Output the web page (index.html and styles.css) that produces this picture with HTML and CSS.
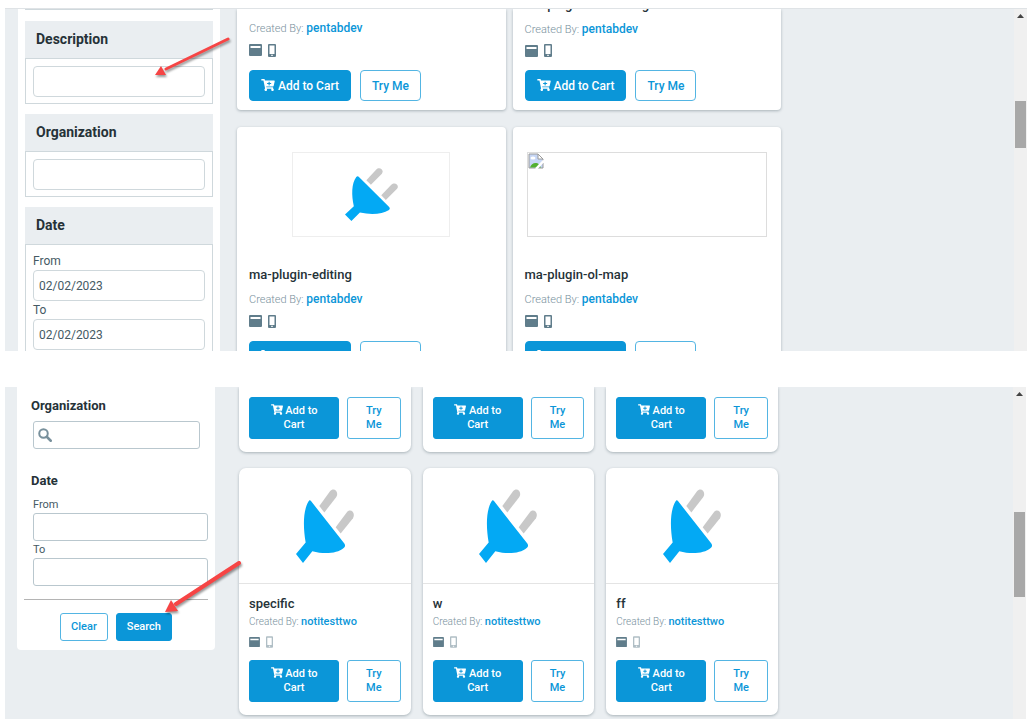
FILE: index.html
```html
<!DOCTYPE html>
<html lang="en">
<head>
    <meta charset="UTF-8">
    <meta name="viewport" content="width=device-width, initial-scale=1.0">
    <title>Plugin Store</title>
    <link rel="stylesheet" href="styles.css">
</head>
<body>
    <!-- Shared icons -->
    <svg class="sprite" aria-hidden="true">
        <symbol id="cart" viewBox="0 0 576 512">
            <path d="M504.717 320H211.572l6.545 32h268.418c15.401 0 26.816 14.301 23.403 29.319l-5.517 24.276C523.112 414.668 536 433.828 536 456c0 31.202-25.519 56.444-56.824 55.994-29.823-.429-54.35-24.631-55.155-54.447-.44-16.287 6.085-31.049 16.803-41.548H231.176C241.553 426.165 248 440.326 248 456c0 31.813-26.528 57.431-58.67 55.938-28.54-1.325-51.751-24.385-53.251-52.917-1.158-22.034 10.436-41.455 28.051-51.586L93.883 64H24C10.745 64 0 53.255 0 40V24C0 10.745 10.745 0 24 0h102.529c11.401 0 21.228 8.021 23.513 19.19L159.208 64H551.99c15.401 0 26.816 14.301 23.403 29.319l-47.273 208C525.637 312.246 515.923 320 504.717 320zM408 168h-48v-40c0-8.837-7.163-16-16-16h-16c-8.837 0-16 7.163-16 16v40h-48c-8.837 0-16 7.163-16 16v16c0 8.837 7.163 16 16 16h48v40c0 8.837 7.163 16 16 16h16c8.837 0 16-7.163 16-16v-40h48c8.837 0 16-7.163 16-16v-16c0-8.837-7.163-16-16-16z"/>
        </symbol>
        <symbol id="window" viewBox="0 0 26 24">
            <path fill-rule="evenodd" d="M2 0h22a2 2 0 0 1 2 2v20a2 2 0 0 1-2 2H2a2 2 0 0 1-2-2V2a2 2 0 0 1 2-2zM3 4v4h20V4z"/>
        </symbol>
        <symbol id="mobile" viewBox="0 0 16 26">
            <path fill-rule="evenodd" d="M2 0h12a2 2 0 0 1 2 2v22a2 2 0 0 1-2 2H2a2 2 0 0 1-2-2V2a2 2 0 0 1 2-2zM3 3v17h10V3zM6.500 21.500v2.500h3v-2.500z"/>
        </symbol>
        <symbol id="search" viewBox="0 0 28 28">
            <circle cx="11" cy="11" r="8.500" fill="none" stroke="currentColor" stroke-width="4"/>
            <path d="M17.500 17.500l8 8" fill="none" stroke="currentColor" stroke-width="5" stroke-linecap="round"/>
        </symbol>
        <symbol id="plug" viewBox="198 326 174 221" preserveAspectRatio="none">
            <path fill="#03a9f4" d="M243 362L343 489Q348 497 341 502C322 518 285 522 247 512L219 547L198 520L227 486C219 440 219 392 235 364Q239 357 243 362z"/>
            <path fill="#c8c8c8" d="M268 377L300 333C311 319 328 334 319 350L283 396z"/>
            <path fill="#c8c8c8" d="M317 440L350 396C361 382 378 397 369 413L332 459z"/>
        </symbol>
        <symbol id="up" viewBox="0 0 7 4">
            <path d="M0 4L3.500 0L7 4z"/>
        </symbol>
    </svg>

    <section class="pane pane-top">
        <aside class="filters">
            <div class="group-end"></div>
            <div class="group">
                <label class="group-title" for="description">Description</label>
                <div class="group-body">
                    <input type="text" id="description" class="field">
                </div>
            </div>
            <div class="group">
                <label class="group-title" for="organization">Organization</label>
                <div class="group-body">
                    <input type="text" id="organization" class="field">
                </div>
            </div>
            <div class="group">
                <h3 class="group-title">Date</h3>
                <div class="group-body">
                    <label class="field-label" for="from">From</label>
                    <input type="text" id="from" class="field" value="02/02/2023">
                    <label class="field-label" for="to">To</label>
                    <input type="text" id="to" class="field" value="02/02/2023">
                </div>
            </div>
        </aside>

        <main class="cards">
            <article class="card card-cut">
                <p class="author">Created By: <a href="#">pentabdev</a></p>
                <div class="devices"><svg class="window"><use href="#window"/></svg><svg class="mobile"><use href="#mobile"/></svg></div>
                <div class="actions">
                    <button class="btn btn-fill"><svg class="cart"><use href="#cart"/></svg> Add to Cart</button>
                    <button class="btn">Try Me</button>
                </div>
            </article>
            <article class="card card-cut">
                <h2 class="name">ma-plugin-measuring</h2>
                <p class="author">Created By: <a href="#">pentabdev</a></p>
                <div class="devices"><svg class="window"><use href="#window"/></svg><svg class="mobile"><use href="#mobile"/></svg></div>
                <div class="actions">
                    <button class="btn btn-fill"><svg class="cart"><use href="#cart"/></svg> Add to Cart</button>
                    <button class="btn">Try Me</button>
                </div>
            </article>
            <article class="card">
                <div class="thumb"><svg class="plug"><use href="#plug"/></svg></div>
                <h2 class="name">ma-plugin-editing</h2>
                <p class="author">Created By: <a href="#">pentabdev</a></p>
                <div class="devices"><svg class="window"><use href="#window"/></svg><svg class="mobile"><use href="#mobile"/></svg></div>
                <div class="actions">
                    <button class="btn btn-fill"><svg class="cart"><use href="#cart"/></svg> Add to Cart</button>
                    <button class="btn">Try Me</button>
                </div>
            </article>
            <article class="card">
                <div class="thumb thumb-broken">
                    <svg class="broken" viewBox="0 0 16 16">
                        <path d="M1 1h9l5 5v9H1z" fill="#c6d6f5" stroke="#9a9a9a"/>
                        <path d="M10 1v5h5z" fill="#fff" stroke="#9a9a9a"/>
                        <ellipse cx="5" cy="5" rx="2.500" ry="1.500" fill="#fff"/>
                        <path d="M2 14.500c1-4 6-6 9-3l2 3z" fill="#52b030"/>
                        <path d="M16 7.500L8 16" stroke="#fff" stroke-width="2.500"/>
                    </svg>
                </div>
                <h2 class="name">ma-plugin-ol-map</h2>
                <p class="author">Created By: <a href="#">pentabdev</a></p>
                <div class="devices"><svg class="window"><use href="#window"/></svg><svg class="mobile"><use href="#mobile"/></svg></div>
                <div class="actions">
                    <button class="btn btn-fill"><svg class="cart"><use href="#cart"/></svg> Add to Cart</button>
                    <button class="btn">Try Me</button>
                </div>
            </article>
        </main>

        <div class="scrollbar">
            <svg class="up"><use href="#up"/></svg>
            <div class="scroll-thumb"></div>
        </div>

        <svg class="arrow" viewBox="0 0 80 46">
            <path d="M75 5L13 35" stroke="#f64545" stroke-width="3" stroke-linecap="round"/>
            <path d="M2 41L8 32L13 41z" fill="#f64545"/>
        </svg>
    </section>

    <section class="pane pane-bottom">
        <aside class="filters">
            <label class="filter-title" for="org">Organization</label>
            <div class="search-box">
                <svg class="search"><use href="#search"/></svg>
                <input type="text" id="org">
            </div>
            <h3 class="filter-title">Date</h3>
            <label class="field-label" for="dateFrom">From</label>
            <input type="text" id="dateFrom" class="field">
            <label class="field-label" for="dateTo">To</label>
            <input type="text" id="dateTo" class="field">
            <div class="filter-actions">
                <button class="btn">Clear</button>
                <button class="btn btn-fill">Search</button>
            </div>
        </aside>

        <main class="cards">
            <article class="card card-cut">
                <div class="actions">
                    <button class="btn btn-fill"><svg class="cart"><use href="#cart"/></svg> Add to Cart</button>
                    <button class="btn">Try Me</button>
                </div>
            </article>
            <article class="card card-cut">
                <div class="actions">
                    <button class="btn btn-fill"><svg class="cart"><use href="#cart"/></svg> Add to Cart</button>
                    <button class="btn">Try Me</button>
                </div>
            </article>
            <article class="card card-cut">
                <div class="actions">
                    <button class="btn btn-fill"><svg class="cart"><use href="#cart"/></svg> Add to Cart</button>
                    <button class="btn">Try Me</button>
                </div>
            </article>
            <article class="card">
                <div class="thumb"><svg class="plug"><use href="#plug"/></svg></div>
                <h2 class="name">specific</h2>
                <p class="author">Created By: <a href="#">notitesttwo</a></p>
                <div class="devices"><svg class="window"><use href="#window"/></svg><svg class="mobile"><use href="#mobile"/></svg></div>
                <div class="actions">
                    <button class="btn btn-fill"><svg class="cart"><use href="#cart"/></svg> Add to Cart</button>
                    <button class="btn">Try Me</button>
                </div>
            </article>
            <article class="card">
                <div class="thumb"><svg class="plug"><use href="#plug"/></svg></div>
                <h2 class="name">w</h2>
                <p class="author">Created By: <a href="#">notitesttwo</a></p>
                <div class="devices"><svg class="window"><use href="#window"/></svg><svg class="mobile"><use href="#mobile"/></svg></div>
                <div class="actions">
                    <button class="btn btn-fill"><svg class="cart"><use href="#cart"/></svg> Add to Cart</button>
                    <button class="btn">Try Me</button>
                </div>
            </article>
            <article class="card">
                <div class="thumb"><svg class="plug"><use href="#plug"/></svg></div>
                <h2 class="name">ff</h2>
                <p class="author">Created By: <a href="#">notitesttwo</a></p>
                <div class="devices"><svg class="window"><use href="#window"/></svg><svg class="mobile"><use href="#mobile"/></svg></div>
                <div class="actions">
                    <button class="btn btn-fill"><svg class="cart"><use href="#cart"/></svg> Add to Cart</button>
                    <button class="btn">Try Me</button>
                </div>
            </article>
        </main>

        <div class="scrollbar">
            <svg class="up"><use href="#up"/></svg>
            <div class="scroll-thumb"></div>
        </div>

        <svg class="arrow" viewBox="0 0 82 60">
            <path d="M76 5L13 46" stroke="#f64545" stroke-width="4" stroke-linecap="round"/>
            <path d="M2 54L8 42L15 53z" fill="#f64545"/>
        </svg>
    </section>
</body>
</html>
```

FILE: styles.css
```css
* {
    box-sizing: border-box;
}

body {
    margin: 0;
    padding: 8px 8px 6px 5px;
    background-color: #fff;
    font-family: Roboto, 'Liberation Sans', sans-serif;
    font-size: 12px;
    color: #263238;
}

h2, h3, p {
    margin: 0;
}

svg {
    flex: none;
    fill: currentColor;
}

.sprite {
    position: absolute;
    width: 0;
    height: 0;
}

.pane {
    position: relative;
    display: flex;
    overflow: hidden;
    background-color: #eaeef1;
}

.pane-top {
    height: 343px;
    border-top: 1px solid #dfe3e6;
}

.pane-bottom {
    height: 332px;
    margin: 36px 1px 0 0;
    font-size: 11px;
}

/* Filters */
.filters {
    flex: none;
    background-color: #fff;
}

.pane-top .filters {
    width: 202px;
    margin-left: 13px;
    padding: 0 7px;
}

.group-end {
    border-top: 1px solid #cfd8dc;
    margin-bottom: 11px;
}

.group {
    margin-bottom: 10px;
}

.group-title {
    display: block;
    padding: 0 11px;
    background-color: #eaeef1;
    font-size: 14px;
    font-weight: 700;
    line-height: 37px;
}

.group-body {
    padding: 7px 7px 6px;
    border: 1px solid #cfd8dc;
}

.field {
    display: block;
    width: 100%;
    height: 31px;
    padding: 0 5px;
    border: 1px solid #cfd8dc;
    border-radius: 4px;
    background-color: #fff;
    font-family: inherit;
    font-size: 12px;
    color: #455a64;
}

.field-label {
    display: block;
    font-size: 12px;
    line-height: 18px;
    color: #455a64;
}

.pane-bottom .filters {
    align-self: flex-start;
    width: 198px;
    margin-left: 12px;
    padding: 11px 7px 9px 16px;
    border-radius: 0 0 4px 4px;
}

.filter-title {
    display: block;
    margin-left: -2px;
    font-size: 13px;
    font-weight: 700;
    line-height: 16px;
}

.search-box {
    display: flex;
    align-items: center;
    height: 28px;
    margin: 7px 8px 24px 0;
    padding: 0 4px;
    border: 1px solid #b9c7ce;
    border-radius: 3px;
    color: #78909c;
}

.search-box input {
    flex: 1;
    min-width: 0;
    border: none;
    outline: none;
}

.search {
    width: 14px;
    height: 14px;
}

.pane-bottom .field-label {
    font-size: 11px;
    line-height: 17px;
}

.pane-bottom h3 + .field-label {
    margin-top: 7px;
}

.pane-bottom .field {
    height: 28px;
    border-color: #b9c7ce;
    border-radius: 3px;
}

.filter-actions {
    display: flex;
    justify-content: center;
    gap: 8px;
    margin: 13px 0 0 -9px;
    padding-top: 13px;
    border-top: 1px solid #b4b4b4;
}

/* Cards */
.cards {
    flex: 1;
    display: grid;
    align-content: start;
}

.pane-top .cards {
    grid-template-columns: repeat(2, 1fr);
    gap: 17px 7px;
    max-width: 561px;
    padding-left: 17px;
}

.pane-bottom .cards {
    grid-template-columns: repeat(3, 1fr);
    gap: 16px 12px;
    max-width: 563px;
    padding-left: 24px;
}

.card {
    display: flex;
    flex-direction: column;
    padding: 25px 12px 9px;
    border-radius: 4px;
    background-color: #fff;
    box-shadow: 0 1px 3px rgba(69, 90, 100, 0.4);
}

.pane-bottom .card {
    padding: 0 10px 13px;
    border-radius: 7px;
}

/* Rows that are scrolled half out of the pane */
.card-cut,
.pane-bottom .card-cut {
    justify-content: flex-end;
    border-radius: 0 0 4px 4px;
}

.pane-top .card-cut {
    height: 101px;
    padding-top: 0;
}

.pane-bottom .card-cut {
    height: 65px;
    border-radius: 0 0 7px 7px;
}

.thumb {
    display: flex;
    align-items: center;
    justify-content: center;
    align-self: center;
    width: 158px;
    height: 85px;
    margin-bottom: 29px;
    border: 1px solid #eee;
}

.thumb-broken {
    align-items: flex-start;
    justify-content: flex-start;
    width: 240px;
    border-color: #ddd;
}

.pane-bottom .thumb {
    align-self: stretch;
    width: auto;
    height: 116px;
    margin: 0 -10px 11px;
    border-width: 0 0 1px;
    border-color: #e4e4e4;
}

.plug {
    width: 53px;
    height: 53px;
}

.pane-bottom .plug {
    width: 58px;
    height: 74px;
}

.broken {
    width: 16px;
    height: 16px;
}

.name {
    font-size: 13px;
    font-weight: 500;
    line-height: 18px;
}

.author {
    margin-top: 7px;
    font-size: 11px;
    font-weight: 300;
    line-height: 16px;
    color: #78909c;
}

.author a {
    font-size: 12px;
    font-weight: 500;
    color: #0b96d8;
    text-decoration: none;
}

.pane-bottom .author {
    margin-top: 1px;
    font-size: 10px;
}

.pane-bottom .author a {
    font-size: 11px;
}

.devices {
    display: flex;
    align-items: center;
    gap: 6px;
    height: 14px;
    margin: 6px 0 13px;
    color: #607d8b;
}

.pane-bottom .devices {
    margin: 5px 0 11px;
}

.window {
    width: 13px;
    height: 12px;
}

.mobile {
    width: 8px;
    height: 13px;
}

.pane-bottom .window {
    width: 11px;
    height: 10px;
}

.pane-bottom .mobile {
    width: 7px;
    height: 12px;
    color: #b0bec5;
}

.actions {
    display: flex;
    gap: 9px;
}

.btn {
    height: 31px;
    padding: 0 11px;
    border: 1px solid #53b5e3;
    border-radius: 4px;
    background-color: #fff;
    color: #0b96d8;
    font-family: inherit;
    font-size: 12px;
    font-weight: 500;
    line-height: 14px;
    cursor: pointer;
}

.btn-fill {
    border-color: #0b96d8;
    background-color: #0b96d8;
    color: #fff;
}

.cart {
    width: 14px;
    height: 12px;
    vertical-align: -1px;
}

.pane-bottom .btn {
    height: 28px;
    padding: 0 10px;
    border-radius: 3px;
    font-size: 11px;
}

.pane-bottom .actions {
    gap: 8px;
}

.pane-bottom .actions .btn {
    flex: 1;
    height: 42px;
}

.pane-bottom .actions .btn-fill {
    flex: none;
    width: 90px;
    padding: 0 16px;
}

.pane-bottom .cart {
    width: 12px;
    height: 11px;
}

/* Scrollbar */
.scrollbar {
    display: flex;
    flex-direction: column;
    align-items: center;
    flex: none;
    width: 13px;
    margin-left: auto;
    padding-top: 5px;
    background-color: #f0f0f0;
}

.up {
    width: 7px;
    height: 4px;
    color: #444;
}

.scroll-thumb {
    width: 11px;
    height: 47px;
    margin-top: 83px;
    background-color: #a8a8a8;
}

.pane-bottom .scroll-thumb {
    height: 85px;
    margin-top: 116px;
}

/* Pointers drawn over the filters */
.arrow {
    position: absolute;
    fill: none;
    filter: drop-shadow(1px 2px 1px rgba(0, 0, 0, 0.4));
}

.pane-top .arrow {
    top: 25px;
    left: 148px;
    width: 80px;
    height: 46px;
}

.pane-bottom .arrow {
    top: 171px;
    left: 158px;
    width: 82px;
    height: 60px;
}
```
